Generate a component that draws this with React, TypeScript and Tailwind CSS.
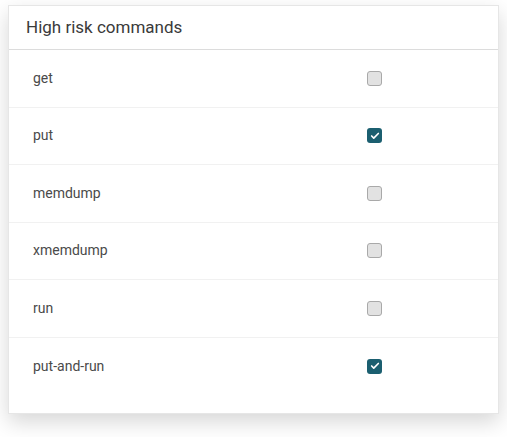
import { Check } from 'lucide-react';

const commands = [
    { name: 'get', checked: false },
    { name: 'put', checked: true },
    { name: 'memdump', checked: false },
    { name: 'xmemdump', checked: false },
    { name: 'run', checked: false },
    { name: 'put-and-run', checked: true },
];

export default function App() {
    return (
        <div className="w-[507px] h-[437px] bg-white pt-[5px] pl-[8px] font-['Roboto',sans-serif]">
            <div className="w-[491px] h-[409px] bg-white border border-[#e6e6e6] shadow-[0_8px_20px_rgba(0,0,0,0.16)] flex flex-col">
                {/* Header */}
                <div className="h-[44px] flex items-center px-[17px] border-b border-[#dcdcdc] shrink-0">
                    <span className="text-[17px] text-[#3a3a3a]">High risk commands</span>
                </div>

                {/* Rows */}
                <div className="flex flex-col">
                    {commands.map((cmd, i) => (
                        <div
                            key={cmd.name}
                            className={`h-[57.5px] flex items-center pl-[24px] ${i < commands.length - 1 ? 'border-b border-[#f1f1f1]' : ''}`}
                        >
                            <span className="w-[334px] text-[14px] text-[#4a4a4a]">{cmd.name}</span>
                            {cmd.checked ? (
                                <div className="w-[15px] h-[15px] rounded-[3px] bg-[#1b5f70] flex items-center justify-center">
                                    <Check size={10} strokeWidth={4} className="text-white" />
                                </div>
                            ) : (
                                <div className="w-[15px] h-[15px] rounded-[3px] bg-[#e2e2e2] border border-[#a9a9a9]" />
                            )}
                        </div>
                    ))}
                </div>
            </div>
        </div>
    );
}
